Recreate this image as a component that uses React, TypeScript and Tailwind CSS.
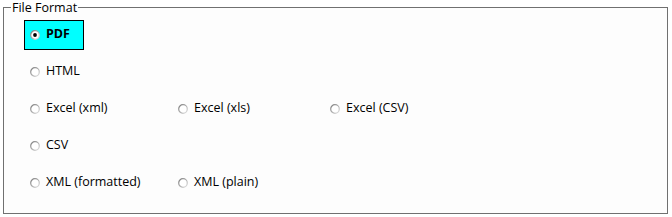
import React from "react";

function Radio({ checked }: { checked?: boolean }) {
  return (
    <svg width="10" height="10" viewBox="0 0 10 10" className="shrink-0">
      <defs>
        <linearGradient id="rg" x1="0" y1="0" x2="1" y2="1">
          <stop offset="0" stopColor="#7a7a7a" />
          <stop offset="1" stopColor="#e2e2e2" />
        </linearGradient>
      </defs>
      <circle cx="5" cy="5" r="4.3" fill="#ffffff" stroke="url(#rg)" strokeWidth="1.2" />
      {checked && <circle cx="5" cy="5" r="1.9" fill="#000000" />}
    </svg>
  );
}

function Item({ label, w }: { label: string; w?: string }) {
  return (
    <div className={`flex items-center gap-[6px] pl-[6px] ${w ?? ""}`}>
      <Radio />
      <span>{label}</span>
    </div>
  );
}

export default function App() {
  return (
    <div className="w-[672px] h-[217px] bg-white pl-[3px] text-[12.5px] text-black" style={{ fontFamily: '"Segoe UI", "Open Sans", "Noto Sans", sans-serif' }}>
      <fieldset className="w-[665px] h-[214px] border border-[#707070] bg-[#fdfdfd]">
        <legend className="ml-[7px] px-[1px] leading-[15px] text-[12.5px]">File Format</legend>
        <div className="flex flex-col pl-[20px] pt-[1px]">
          <div className="h-[37px] flex items-center">
            <div className="flex items-center gap-[6px] w-[60px] h-[30px] border border-black bg-[#00ffff] pl-[5px] font-bold">
              <Radio checked />
              <span>PDF</span>
            </div>
          </div>
          <div className="h-[37px] flex items-center">
            <Item label="HTML" />
          </div>
          <div className="h-[37px] flex items-center">
            <Item label="Excel (xml)" w="w-[148px]" />
            <Item label="Excel (xls)" w="w-[152px]" />
            <Item label="Excel (CSV)" />
          </div>
          <div className="h-[37px] flex items-center">
            <Item label="CSV" />
          </div>
          <div className="h-[37px] flex items-center">
            <Item label="XML (formatted)" w="w-[148px]" />
            <Item label="XML (plain)" />
          </div>
        </div>
      </fieldset>
    </div>
  );
}
